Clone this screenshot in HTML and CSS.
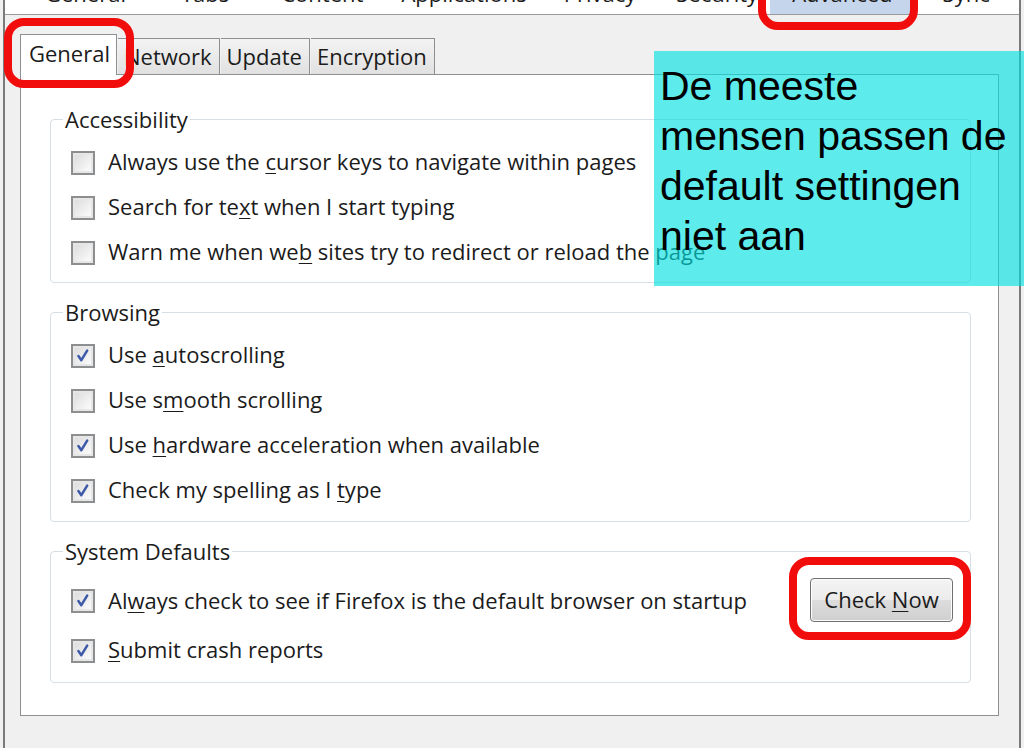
FILE: index.html
```html
<!DOCTYPE html>
<html>
<head>
<meta charset="utf-8">
<link rel="stylesheet" href="styles.css">
</head>
<body>
<div class="window">
  <div class="toolbar">
    <span class="tool t-general">General</span>
    <span class="tool t-tabs">Tabs</span>
    <span class="tool t-content">Content</span>
    <span class="tool t-apps">Applications</span>
    <span class="tool t-privacy">Privacy</span>
    <span class="tool t-security">Security</span>
    <span class="tool t-advanced">Advanced</span>
    <span class="tool t-sync">Sync</span>
  </div>
  <div class="content">
    <div class="tabs">
      <div class="tab selected">General</div>
      <div class="tab">Network</div>
      <div class="tab">Update</div>
      <div class="tab">Encryption</div>
    </div>
    <div class="panel">
      <fieldset class="group g-access">
        <legend>Accessibility</legend>
        <div class="row"><span class="cb"></span><span class="label">Always use the <u>c</u>ursor keys to navigate within pages</span></div>
        <div class="row"><span class="cb"></span><span class="label">Search for te<u>x</u>t when I start typing</span></div>
        <div class="row"><span class="cb"></span><span class="label">Warn me when we<u>b</u> sites try to redirect or reload the page</span></div>
      </fieldset>
      <fieldset class="group g-browse">
        <legend>Browsing</legend>
        <div class="row"><span class="cb checked"><svg viewBox="0 0 24 24"><path d="M6.5 12 L10 17 L17 5.5" /></svg></span><span class="label">Use <u>a</u>utoscrolling</span></div>
        <div class="row"><span class="cb"></span><span class="label">Use s<u>m</u>ooth scrolling</span></div>
        <div class="row"><span class="cb checked"><svg viewBox="0 0 24 24"><path d="M6.5 12 L10 17 L17 5.5" /></svg></span><span class="label">Use <u>h</u>ardware acceleration when available</span></div>
        <div class="row"><span class="cb checked"><svg viewBox="0 0 24 24"><path d="M6.5 12 L10 17 L17 5.5" /></svg></span><span class="label">Check my spelling as I <u>t</u>ype</span></div>
      </fieldset>
      <fieldset class="group g-system">
        <legend>System Defaults</legend>
        <div class="row row-tall"><span class="cb checked"><svg viewBox="0 0 24 24"><path d="M6.5 12 L10 17 L17 5.5" /></svg></span><span class="label">Al<u>w</u>ays check to see if Firefox is the default browser on startup</span><button class="btn">Check <u>N</u>ow</button></div>
        <div class="row"><span class="cb checked"><svg viewBox="0 0 24 24"><path d="M6.5 12 L10 17 L17 5.5" /></svg></span><span class="label"><u>S</u>ubmit crash reports</span></div>
      </fieldset>
    </div>
  </div>
</div>
<div class="note">De meeste<br>mensen passen de<br>default settingen<br>niet aan</div>
<div class="mark mark-general"></div>
<div class="mark mark-advanced"></div>
<div class="mark mark-check"></div>
</body>
</html>
```

FILE: styles.css
```css
html, body {
  margin: 0;
  padding: 0;
}
body {
  width: 1024px;
  height: 748px;
  overflow: hidden;
  position: relative;
  background: #f0f0f0;
  font-family: "Open Sans", "Noto Sans", sans-serif;
  color: #1b1b1b;
}
.window {
  margin: 0 3px;
  height: 748px;
  border-left: 2px solid #7a7a7a;
  border-right: 2px solid #7a7a7a;
  box-sizing: border-box;
  background: #f0f0f0;
}
.toolbar {
  height: 14px;
  background: #ffffff;
  border-bottom: 1px solid #9a9a9a;
  overflow: hidden;
  position: relative;
  display: flex;
  font-size: 22px;
  line-height: 30px;
}
.tool {
  display: block;
  margin-top: -22px;
  height: 37px;
  white-space: nowrap;
}
.t-general { margin-left: 40px; }
.t-tabs { margin-left: 55px; }
.t-content { margin-left: 52px; }
.t-apps { margin-left: 38px; }
.t-privacy { margin-left: 37px; }
.t-security { margin-left: 40px; }
.t-advanced {
  margin-left: 12px;
  padding: 0 22px;
  background: #c5d5ec;
}
.t-sync { margin-left: 28px; }
.content {
  padding: 19px 20px 0 15px;
}
.tabs {
  display: flex;
  align-items: flex-end;
  height: 40px;
  font-size: 22px;
}
.tab {
  height: 36px;
  box-sizing: border-box;
  border: 1px solid #8d8f93;
  border-bottom: none;
  border-left: none;
  background: linear-gradient(#f3f3f3, #e1e1e1);
  padding: 0 7px 0 6px;
  line-height: 34px;
  margin-right: 1px;
}
.tab.selected {
  height: 41px;
  margin-bottom: -1px;
  border-left: 1px solid #8d8f93;
  background: #ffffff;
  padding: 0 6px 0 8px;
  line-height: 36px;
  position: relative;
  z-index: 1;
}
.panel {
  background: #ffffff;
  border: 1px solid #8d8f93;
  padding: 29px 27px 32px 29px;
}
.group {
  margin: 0;
  border: 1px solid #d6dfe6;
  border-radius: 4px;
  padding: 6px 17px 7px 20px;
}
.group + .group {
  margin-top: 14px;
}
.group legend {
  font-size: 22px;
  line-height: 30px;
  padding: 0 2px;
  margin-left: -8px;
}
.g-browse { padding-bottom: 8px; }
.g-system { padding-top: 8px; padding-bottom: 9px; }
.row {
  height: 45px;
  display: flex;
  align-items: center;
  font-size: 22px;
}
.row-tall { height: 54px; }
.label {
  flex: 1;
  white-space: nowrap;
  margin-top: -3px;
}
u {
  text-underline-offset: 3px;
  text-decoration-thickness: 1px;
}
.cb {
  width: 24px;
  height: 24px;
  box-sizing: border-box;
  border: 2px solid #8c8e90;
  background: linear-gradient(135deg, #d9d9d9, #f4f4f4 70%, #ffffff);
  box-shadow: inset 0 0 0 2px #e6e6e6;
  margin-right: 13px;
  flex: none;
  display: flex;
}
.cb svg {
  width: 20px;
  height: 20px;
}
.cb path {
  fill: none;
  stroke: #3c5aa8;
  stroke-width: 3;
  stroke-linecap: round;
  stroke-linejoin: round;
}
.btn {
  width: 143px;
  height: 44px;
  box-sizing: border-box;
  border: 1px solid #707070;
  border-radius: 4px;
  background: linear-gradient(#f4f4f4 0%, #ebebeb 50%, #dddddd 51%, #cfcfcf 100%);
  box-shadow: inset 0 0 0 1px #fcfcfc;
  font-family: inherit;
  font-size: 22px;
  color: #1b1b1b;
  padding: 0 0 3px;
  margin-top: -2px;
}
.note {
  position: absolute;
  left: 654px;
  top: 51px;
  width: 370px;
  height: 235px;
  box-sizing: border-box;
  padding: 10px 0 0 6px;
  background: rgba(0, 224, 224, 0.63);
  font-family: "Liberation Sans", Arial, sans-serif;
  font-size: 41px;
  line-height: 50px;
  color: #000;
}
.mark {
  position: absolute;
  box-sizing: border-box;
  border: 8px solid #f20d0d;
  border-radius: 20px;
}
.mark-general {
  left: 4px;
  top: 18px;
  width: 130px;
  height: 70px;
}
.mark-advanced {
  left: 758px;
  top: -30px;
  width: 160px;
  height: 60px;
}
.mark-check {
  left: 789px;
  top: 557px;
  width: 182px;
  height: 83px;
}
```
